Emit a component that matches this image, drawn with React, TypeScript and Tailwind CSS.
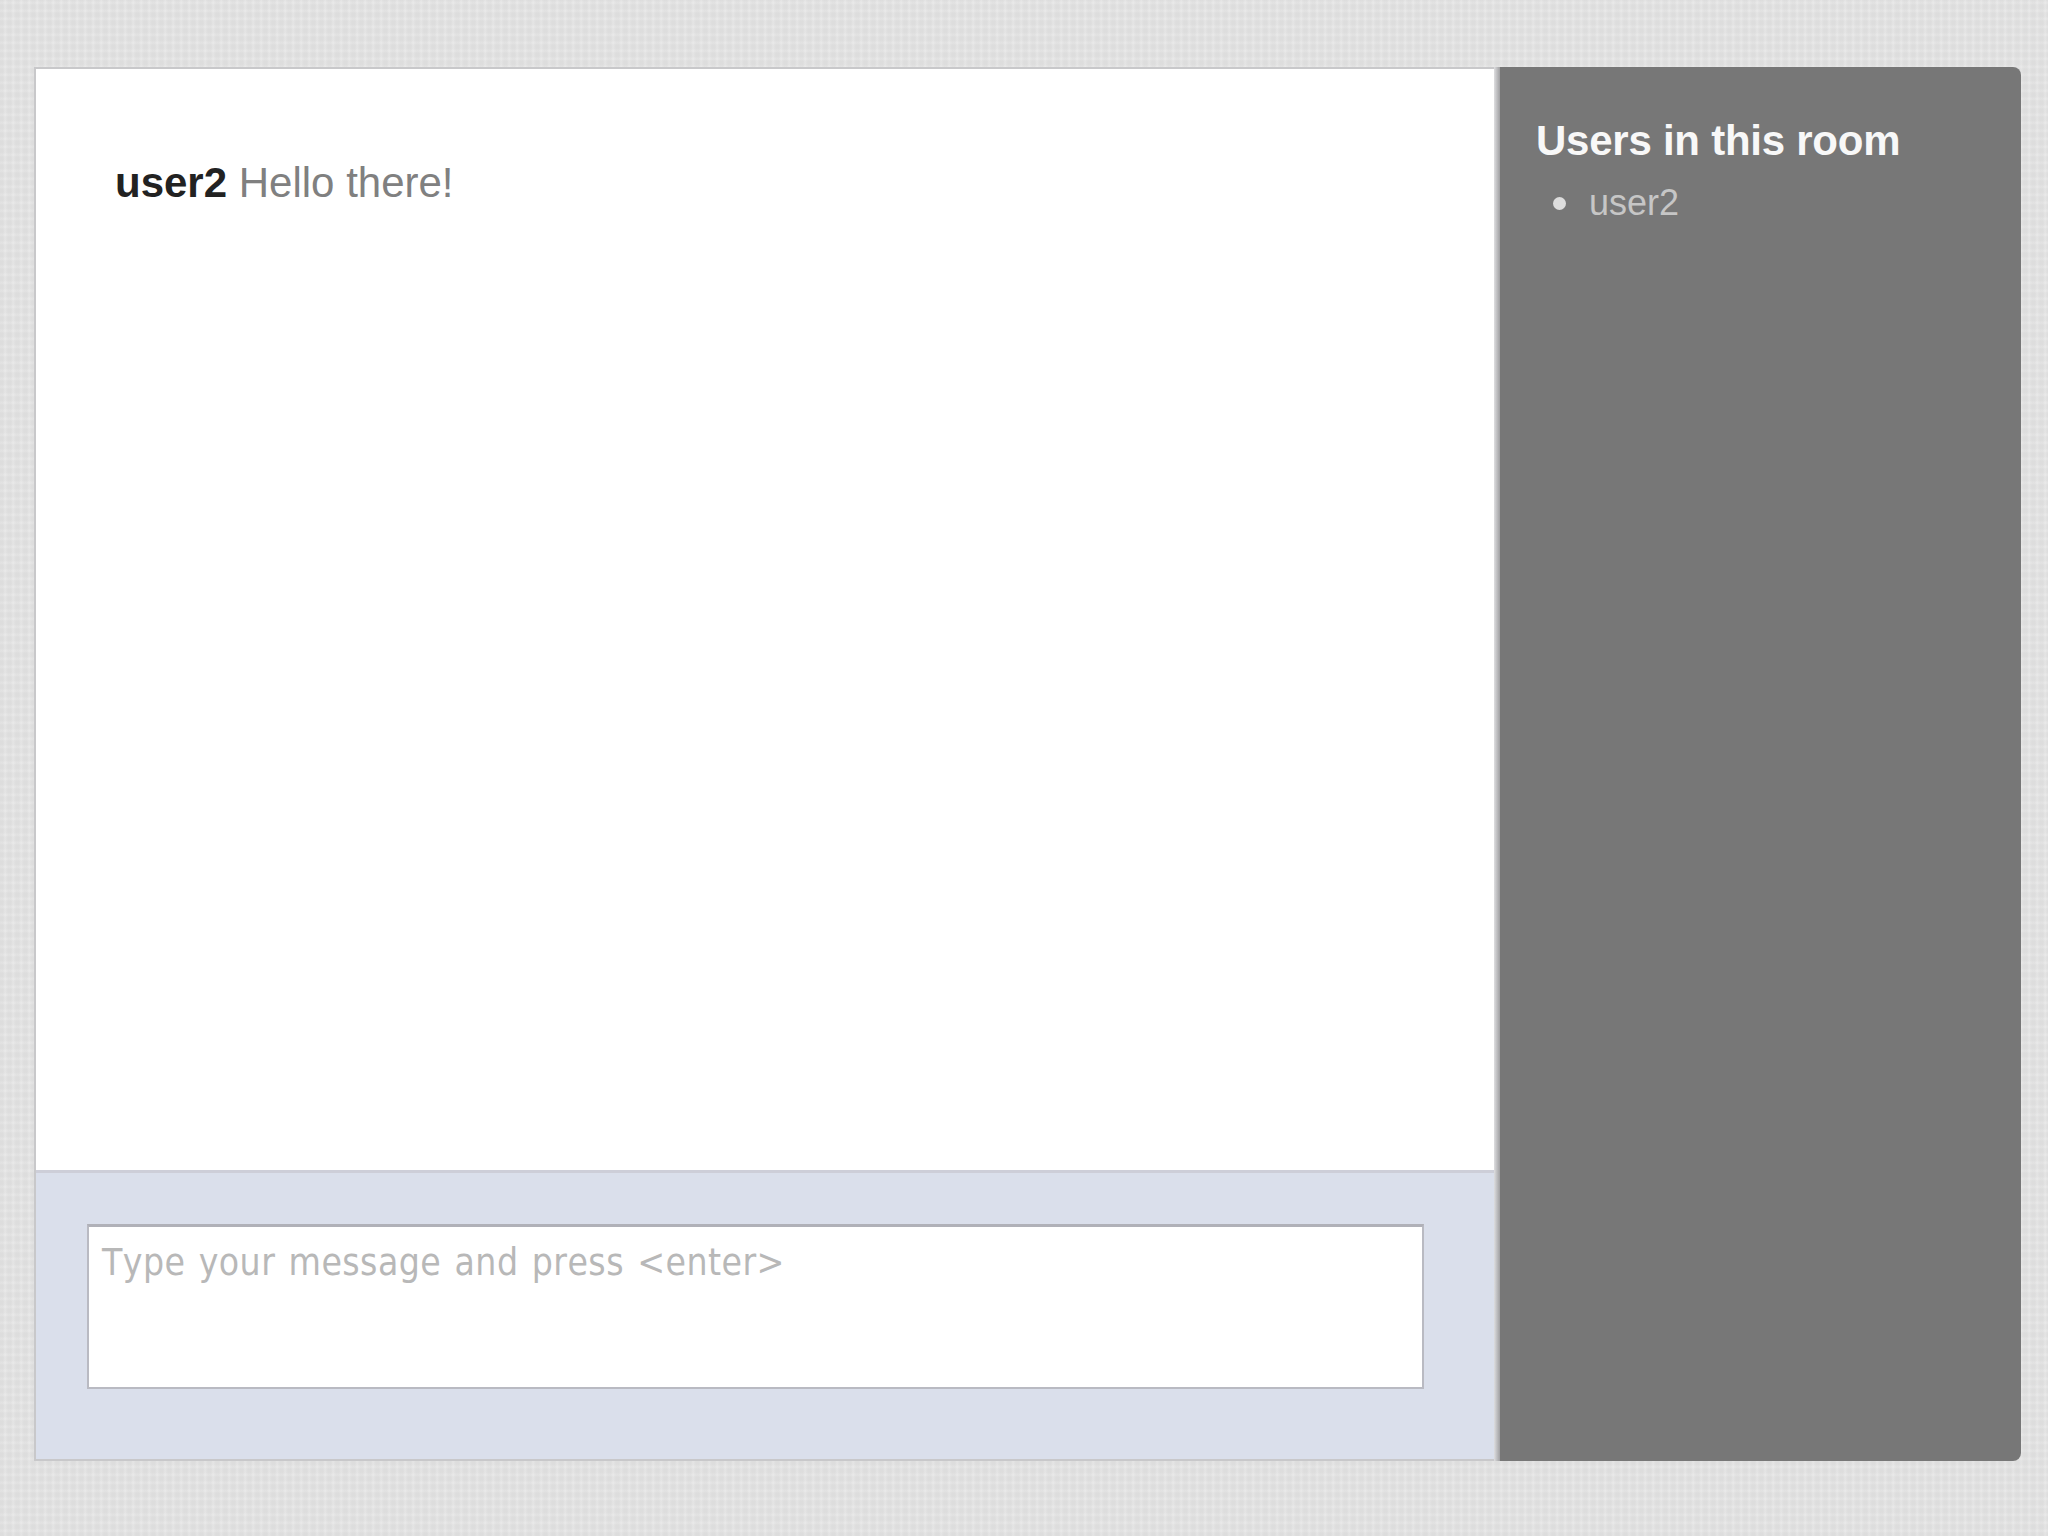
import { useState } from "react";

type Message = { id: number; user: string; text: string };

const messages: Message[] = [{ id: 1, user: "user2", text: "Hello there!" }];
const users = ["user2"];

function MessageList() {
  return (
    <div className="flex-1 bg-white pl-[79px] pt-[90px] text-[42px] leading-[48px] text-[#808080]">
      {messages.map((message) => (
        <p key={message.id}>
          <strong className="font-bold text-[#222222]">{message.user}</strong> {message.text}
        </p>
      ))}
    </div>
  );
}

function Composer() {
  const [value, setValue] = useState("");

  return (
    <div className="h-[289px] border-t-3 border-[#cdced8] bg-[#dadfeb] pl-[51px] pt-[51px]">
      <textarea
        value={value}
        onChange={(e) => setValue(e.target.value)}
        placeholder="Type your message and press <enter>"
        className="block h-[165px] w-[1337px] resize-none border-2 border-t-3 border-[#b9bac2] border-t-[#b0b1b8] bg-white px-[13px] pt-[10px] font-['DejaVu_Sans_Condensed','DejaVu_Sans',sans-serif] text-[37px] leading-[52px] tracking-[0.45px] text-[#444444] outline-none font-stretch-condensed [font-kerning:none] [word-spacing:2.2px] placeholder:text-[#b8b8b8]"
      />
    </div>
  );
}

function UserList() {
  return (
    <aside className="w-[521px] rounded-r-lg bg-[#777777] pl-[36px] pt-[50px]">
      <h3 className="text-[42px] font-bold leading-[48px] tracking-[-0.25px] text-[#f8f8f8]">Users in this room</h3>
      <ul className="pt-[17px]">
        {users.map((user) => (
          <li key={user} className="flex items-center pl-[17px] text-[36px] leading-[42px] text-[#c6c6c6]">
            <span className="mr-[23px] size-[13px] rounded-full bg-[#dddddd]" />
            {user}
          </li>
        ))}
      </ul>
    </aside>
  );
}

export default function App() {
  return (
    <div className="flex h-[1536px] w-[2048px] bg-[#e5e5e5] bg-[repeating-linear-gradient(90deg,rgba(0,0,0,0.018)_0px,rgba(0,0,0,0.018)_3px,rgba(255,255,255,0.12)_5px,rgba(0,0,0,0.018)_8px),repeating-linear-gradient(0deg,rgba(0,0,0,0.018)_0px,rgba(0,0,0,0.018)_3px,rgba(255,255,255,0.1)_5px,rgba(0,0,0,0.018)_8px)] pl-[34px] pt-[67px] font-['Liberation_Sans',Arial,sans-serif]">
      <div className="flex h-[1394px]">
        <main className="flex w-[1460px] flex-col border-y-2 border-l-2 border-[#c8c8ca]">
          <MessageList />
          <Composer />
        </main>
        <div className="w-[6px] bg-linear-to-r from-[#dedee0] to-[#a0a0a2]" />
        <UserList />
      </div>
    </div>
  );
}
